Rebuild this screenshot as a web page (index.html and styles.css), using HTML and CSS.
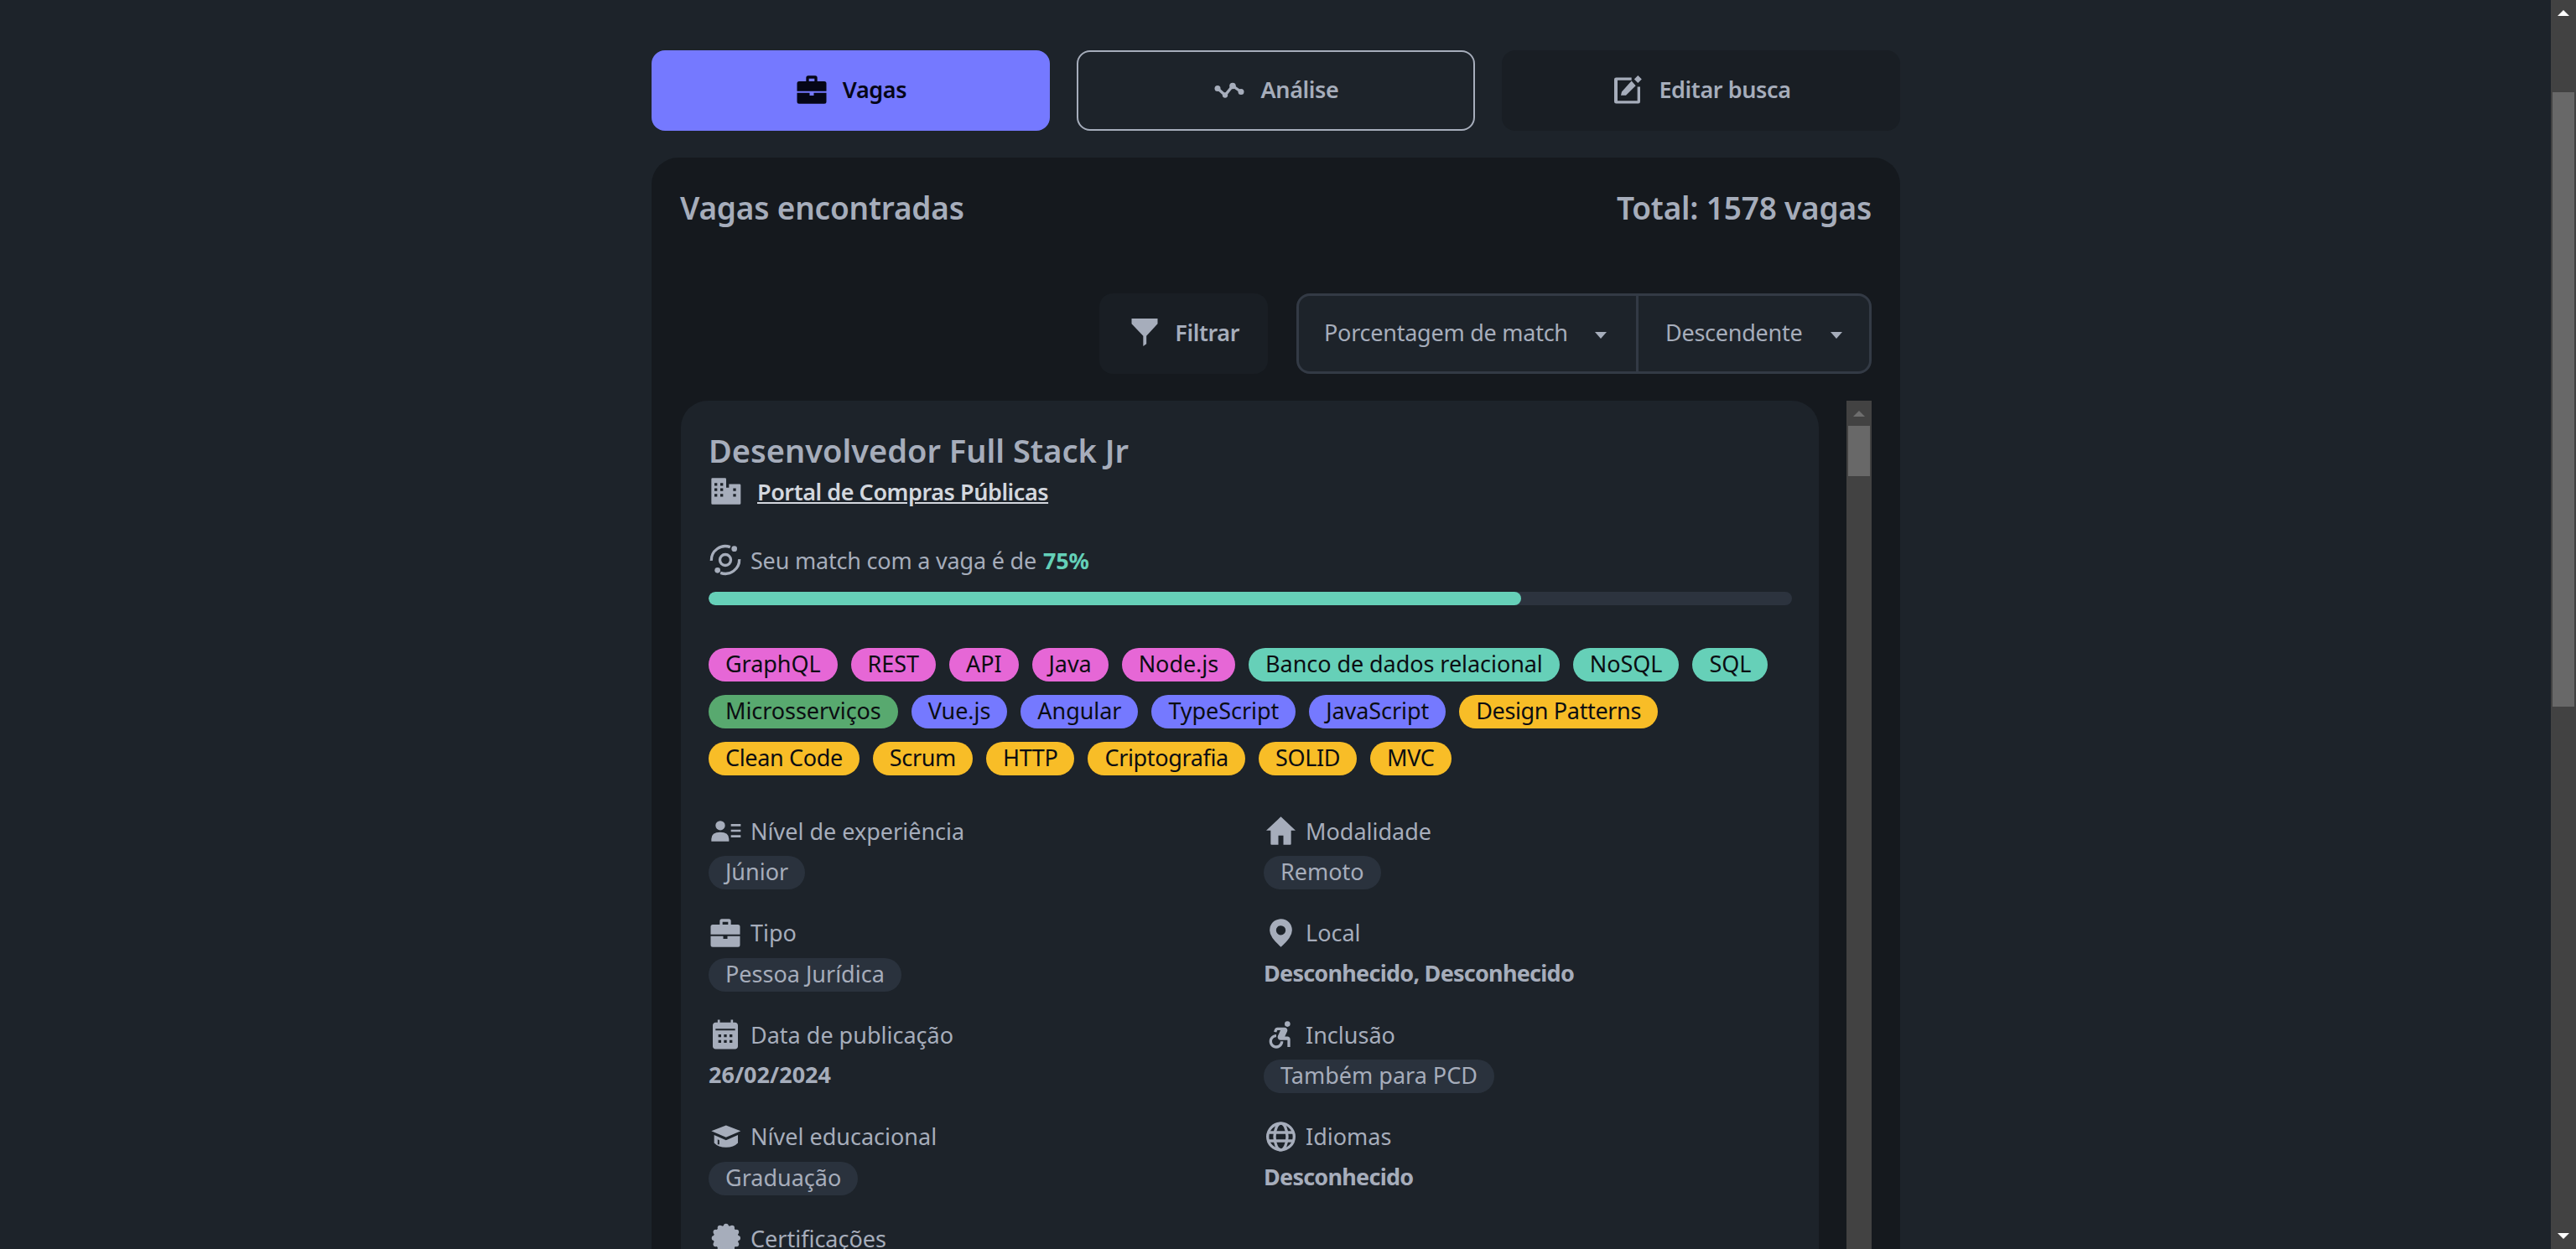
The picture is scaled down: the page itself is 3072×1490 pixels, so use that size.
FILE: index.html
```html
<!DOCTYPE html>
<html lang="pt-BR">

<head>
    <meta charset="UTF-8">
    <title>Vagas</title>
    <link rel="stylesheet" href="styles.css">
</head>

<body>
    <svg class="defs" width="0" height="0">
        <symbol id="i-work" viewBox="0 0 24 24"><path fill-rule="evenodd" d="M8 6V3.500Q8 2 9.500 2h5Q16 2 16 3.500V6h5q1.500 0 1.500 1.500V13H1.500V7.500Q1.500 6 3 6zM10 6h4V4h-4zM1.500 14.200h9v2h3v-2h9v6.300Q22.500 22 21 22H3q-1.500 0-1.500-1.500z"/></symbol>
    </svg>
    <div class="page">
        <nav class="tabs">
            <a class="tab tab-active" href="#"><svg class="icon"><use href="#i-work"/></svg>Vagas</a>
            <a class="tab tab-outline" href="#">
                <svg class="icon" viewBox="0 0 24 24"><path class="icon-line" d="M3 11.100 8.400 15.900 13.800 9.300 19.800 13.500"/><circle cx="3" cy="11.100" r="2.100"/><circle cx="8.400" cy="15.900" r="1.900"/><circle cx="13.800" cy="9.300" r="2.300"/><circle cx="19.800" cy="13.500" r="2.100"/></svg>
                Análise</a>
            <a class="tab tab-dark" href="#">
                <svg class="icon" viewBox="0 0 24 24"><path d="M3.800 3.300h11v2h-10v14.600h14.200v-10h2v10.600q0 1.400-1.400 1.400H3.800q-1.400 0-1.400-1.400V4.700q0-1.400 1.400-1.400z"/><path d="M7.200 16.100 7.800 13.500 14.800 5.700 17.800 9.100 10.800 16.100zM19.400 1.800 22.100 4.500 19.400 7.200 16.700 4.500z"/></svg>
                Editar busca</a>
        </nav>

        <main class="panel">
            <header class="panel-head">
                <h2>Vagas encontradas</h2>
                <h2>Total: 1578 vagas</h2>
            </header>

            <div class="toolbar">
                <button class="filter-btn">
                    <svg class="icon" viewBox="0 0 24 24"><path d="M2.700 1.800H21.300V5.500L13.300 14.200V20L11 21.600V14.200L2.700 5.500Z"/></svg>
                    Filtrar
                </button>
                <div class="sorter">
                    <div class="select select-field">Porcentagem de match<span class="caret"></span></div>
                    <div class="select select-order">Descendente<span class="caret"></span></div>
                </div>
            </div>

            <div class="list">
                <article class="card">
                    <h3>Desenvolvedor Full Stack Jr</h3>
                    <div class="company">
                        <svg class="icon" viewBox="0 0 24 24"><path fill-rule="evenodd" d="M2 3.300q0-.8.8-.8h9q.8 0 .8.8v6.200h2V6.900h7.600q.8 0 .8.8v13q0 .8-.8.8H2.800q-.8 0-.8-.8zM4.200 6.100v2h2v-2zM8.400 6.100v2h2v-2zM4.200 9.900v2h2v-2zM8.400 9.900v2h2v-2zM4.200 13.900v2h2v-2zM8.400 13.900v2h2v-2zM17.600 9.900v2h2v-2zM17.600 13.900v2h2v-2z"/></svg>
                        <a href="#">Portal de Compras Públicas</a>
                    </div>

                    <div class="match">
                        <svg class="icon" viewBox="0 0 24 24"><circle class="icon-line" cx="12" cy="12" r="3.900"/><path class="icon-line" d="M2 12.500A10 10 0 0 1 15.500 2.800M22 11.500A10 10 0 0 1 8.500 21.200"/><circle cx="18.400" cy="4" r="2"/><circle cx="6.400" cy="19.400" r="2"/></svg>
                        Seu match com a vaga é de <b>75%</b>
                    </div>
                    <div class="bar"><div class="bar-fill" style="width: 75%"></div></div>

                    <ul class="tags">
                        <li class="pink">GraphQL</li>
                        <li class="pink">REST</li>
                        <li class="pink">API</li>
                        <li class="pink">Java</li>
                        <li class="pink">Node.js</li>
                        <li class="teal">Banco de dados relacional</li>
                        <li class="teal">NoSQL</li>
                        <li class="teal">SQL</li>
                        <li class="green">Microsserviços</li>
                        <li class="violet">Vue.js</li>
                        <li class="violet">Angular</li>
                        <li class="violet">TypeScript</li>
                        <li class="violet">JavaScript</li>
                        <li class="orange">Design Patterns</li>
                        <li class="orange">Clean Code</li>
                        <li class="orange">Scrum</li>
                        <li class="orange">HTTP</li>
                        <li class="orange">Criptografia</li>
                        <li class="orange">SOLID</li>
                        <li class="orange">MVC</li>
                    </ul>

                    <div class="details">
                        <div class="item">
                            <div class="label"><svg class="icon" viewBox="0 0 24 24"><circle cx="8.400" cy="8.300" r="3.400"/><path d="M2 19.700v-1.800Q2 13 8.300 13t6.300 4.900v1.800zM16 7.200h7v1.600h-7zM16 11.200h7v1.600h-7zM16 15.200h7v1.600h-7z"/></svg>Nível de experiência</div>
                            <span class="pill">Júnior</span>
                        </div>
                        <div class="item">
                            <div class="label"><svg class="icon" viewBox="0 0 24 24"><path d="M12.300 2 1.800 11.800H5V21.400q0 .6.6.6h4.900v-6.500h3.600V22H19q.6 0 .6-.6V11.800h3.200z"/></svg>Modalidade</div>
                            <span class="pill">Remoto</span>
                        </div>
                        <div class="item">
                            <div class="label"><svg class="icon"><use href="#i-work"/></svg>Tipo</div>
                            <span class="pill">Pessoa Jurídica</span>
                        </div>
                        <div class="item">
                            <div class="label"><svg class="icon" viewBox="0 0 24 24"><path fill-rule="evenodd" d="M12.300 2q3.500 0 5.800 2.300t2.200 5.900q0 2.500-2 5.400T12.300 22q-4-3.500-6-6.400t-2-5.400q0-3.600 2.200-5.900T12.300 2zm0 4.700a3.400 3.400 0 1 0 0 6.800 3.400 3.400 0 0 0 0-6.800z"/></svg>Local</div>
                            <span class="value">Desconhecido, Desconhecido</span>
                        </div>
                        <div class="item">
                            <div class="label"><svg class="icon" viewBox="0 0 24 24"><path fill-rule="evenodd" d="M5 3.500h14c1.100 0 2 .9 2 2v15c0 1.100-.9 2-2 2H5c-1.100 0-2-.9-2-2v-15c0-1.100.9-2 2-2zm0 4.500v1.200h14V8zm2 4v2h2v-2zm4 0v2h2v-2zm4 0v2h2v-2zm-8 4v2h2v-2zm4 0v2h2v-2zm4 0v2h2v-2z"/><path d="M6.500 1.500h1.600v3H6.500zM15.900 1.500h1.600v3h-1.600z"/></svg>Data de publicação</div>
                            <span class="value value-date">26/02/2024</span>
                        </div>
                        <div class="item">
                            <div class="label"><svg class="icon" viewBox="0 0 24 24"><circle cx="17" cy="4.540" r="2"/><path d="M14 17h-2c0 1.650-1.350 3-3 3s-3-1.350-3-3 1.350-3 3-3v-2c-2.760 0-5 2.240-5 5s2.240 5 5 5 5-2.240 5-5zm3-3.500h-1.860l1.670-3.670C17.420 8.500 16.440 7 14.960 7h-5.200c-.81 0-1.540.47-1.870 1.200L7.220 10l1.920.53L9.790 9H12l-1.830 4.100c-.6 1.330.39 2.900 1.850 2.900H17v5h2v-5.500c0-1.100-.9-2-2-2z"/></svg>Inclusão</div>
                            <span class="pill">Também para PCD</span>
                        </div>
                        <div class="item">
                            <div class="label"><svg class="icon" viewBox="0 0 24 24"><path fill-rule="evenodd" d="M12.500 3.900 23 8l-10.500 4.500L2 8zM4 10.800l8.500 3.700 8.500-3.700v5.700q-3 3.200-8.500 3.200T4 16.500zM6.500 14v3.500h1.200v-3z"/></svg>Nível educacional</div>
                            <span class="pill">Graduação</span>
                        </div>
                        <div class="item">
                            <div class="label"><svg class="icon" viewBox="0 0 24 24"><g class="icon-line"><circle cx="12.300" cy="12" r="9.500"/><ellipse cx="12.300" cy="12" rx="4.500" ry="9.500"/><path d="M3.300 9h18M3.300 15h18"/></g></svg>Idiomas</div>
                            <span class="value">Desconhecido</span>
                        </div>
                        <div class="item">
                            <div class="label"><svg class="icon" viewBox="0 0 24 24"><circle cx="12.500" cy="12" r="9"/><circle cx="12.500" cy="3.500" r="1.800"/><circle cx="16.800" cy="4.600" r="1.800"/><circle cx="19.900" cy="7.700" r="1.800"/><circle cx="21" cy="12" r="1.800"/><circle cx="19.900" cy="16.300" r="1.800"/><circle cx="16.800" cy="19.400" r="1.800"/><circle cx="12.500" cy="20.500" r="1.800"/><circle cx="8.200" cy="19.400" r="1.800"/><circle cx="5.100" cy="16.300" r="1.800"/><circle cx="4" cy="12" r="1.800"/><circle cx="5.100" cy="7.700" r="1.800"/><circle cx="8.200" cy="4.600" r="1.800"/></svg>Certificações</div>
                        </div>
                    </div>
                </article>

                <div class="scrollbar">
                    <span class="arrow-up"></span>
                    <div class="thumb"></div>
                </div>
            </div>
        </main>
    </div>

    <aside class="page-scroll">
        <span class="arrow-up"></span>
        <div class="thumb"></div>
        <span class="arrow-down"></span>
    </aside>
</body>

</html>
```

FILE: styles.css
```css
* {
    box-sizing: border-box;
}

html,
body {
    height: 100%;
}

body {
    margin: 0;
    overflow: hidden;
    background: #1d232a;
    color: #a6adbb;
    font-family: "Noto Sans", "Open Sans", sans-serif;
    font-size: 27px;
}

a {
    color: inherit;
    text-decoration: none;
}

ul {
    margin: 0;
    padding: 0;
    list-style: none;
}

.defs {
    position: absolute;
}

.icon {
    flex: none;
    width: 40px;
    height: 40px;
    fill: currentColor;
    overflow: visible;
}

.icon-line {
    fill: none;
    stroke: currentColor;
    stroke-width: 2;
}

.page {
    width: 1489px;
    height: 1490px;
    margin-left: 777px;
    padding-top: 60px;
    overflow: hidden;
}

.tabs {
    display: grid;
    grid-template-columns: repeat(3, 1fr);
    gap: 32px;
}

.tab {
    display: flex;
    align-items: center;
    justify-content: center;
    gap: 17px;
    height: 96px;
    padding-bottom: 3px;
    border-radius: 16px;
    font-weight: 600;
    letter-spacing: -0.4px;
}

.tab-active {
    background: #7579ff;
    color: #050617;
}

.tab-outline {
    border: 2px solid #a6adbb;
}

.tab-dark {
    background: #191e24;
}

.panel {
    height: 1400px;
    margin-top: 32px;
    padding: 32px 34px 32px 35px;
    background: #15191e;
    border-radius: 32px 32px 0 0;
}

.panel-head {
    display: flex;
    justify-content: space-between;
    margin-left: -1px;
}

.panel-head h2 {
    margin: 0;
    font-size: 37px;
    font-weight: 600;
    line-height: 56px;
    letter-spacing: -0.2px;
}

.toolbar {
    display: flex;
    justify-content: flex-end;
    gap: 34px;
    margin-top: 74px;
}

.filter-btn {
    display: flex;
    align-items: center;
    gap: 16px;
    height: 96px;
    padding: 0 34px 3px;
    border: 0;
    border-radius: 16px;
    background: #191e24;
    color: inherit;
    font: inherit;
    font-weight: 600;
    letter-spacing: -0.4px;
}

.sorter {
    display: flex;
    height: 96px;
    border: 3px solid #333a45;
    border-radius: 16px;
    background: #1d232a;
    letter-spacing: -0.25px;
}

.select {
    display: flex;
    align-items: center;
    justify-content: space-between;
    padding: 0 32px 3px 30px;
}

.select-field {
    width: 405px;
    border-right: 3px solid #333a45;
    padding-right: 35px;
}

.select-order {
    width: 275px;
    padding-left: 32px;
}

.caret {
    width: 0;
    height: 0;
    margin-top: 6px;
    border-left: 7px solid transparent;
    border-right: 7px solid transparent;
    border-top: 8px solid currentColor;
}

.list {
    display: flex;
    justify-content: space-between;
    align-items: flex-start;
    margin-top: 32px;
}

.card {
    width: 1357px;
    padding: 32px 32px 32px 33px;
    background: #1d232a;
    border-radius: 32px;
}

.card h3 {
    margin: 0;
    font-size: 38px;
    font-weight: 600;
    line-height: 54px;
}

.company {
    display: flex;
    align-items: center;
    gap: 18px;
    height: 36px;
    margin-top: 4px;
}

.company a {
    color: #d3d7de;
    font-weight: 600;
    letter-spacing: -0.45px;
    text-decoration: underline;
}

.match {
    display: flex;
    align-items: center;
    gap: 10px;
    height: 40px;
    margin-top: 44px;
    letter-spacing: -0.2px;
}

.match b {
    margin-left: -2px;
    color: #64d0b8;
}

.bar {
    height: 16px;
    margin-top: 18px;
    border-radius: 8px;
    background: #2c333e;
    overflow: hidden;
}

.bar-fill {
    height: 100%;
    border-radius: 8px;
    background: #66d0b8;
}

.tags {
    display: flex;
    flex-wrap: wrap;
    gap: 16px;
    margin-top: 51px;
}

.tags li {
    height: 40px;
    padding: 0 20px;
    border-radius: 20px;
    color: #0b0d12;
    line-height: 38px;
    letter-spacing: -0.06px;
}

.pink {
    background: #e667d6;
}

.teal {
    background: #66d0b8;
}

.green {
    background: #58a96f;
}

.violet {
    background: #7579ff;
}

.tags .orange {
    background: #f8bd27;
    letter-spacing: -0.35px;
}

.details {
    display: grid;
    grid-template-columns: 662px 1fr;
    grid-auto-rows: 121.6px;
    margin-top: 46px;
}

.label {
    display: flex;
    align-items: center;
    gap: 10px;
    height: 40px;
}

.value {
    display: block;
    margin-top: 8px;
    font-weight: 700;
    line-height: 40px;
    letter-spacing: -0.75px;
}

.value-date {
    letter-spacing: 0;
}

.pill {
    display: inline-block;
    height: 40px;
    margin-top: 10px;
    padding: 0 20px;
    border-radius: 20px;
    background: #2a323d;
    line-height: 38px;
}

.scrollbar {
    position: relative;
    width: 30px;
    height: 1100px;
    background: #424242;
}

.scrollbar .arrow-up {
    position: absolute;
    left: 8px;
    top: 12px;
    border-left: 7px solid transparent;
    border-right: 7px solid transparent;
    border-bottom: 7px solid #6e6e6e;
}

.thumb {
    background: #686868;
}

.scrollbar .thumb {
    position: absolute;
    left: 2px;
    top: 30px;
    width: 26px;
    height: 60px;
}

.page-scroll {
    position: fixed;
    top: 0;
    right: 0;
    width: 30px;
    height: 100%;
    background: #424242;
}

.page-scroll .arrow-up {
    position: absolute;
    left: 8px;
    top: 12px;
    border-left: 7px solid transparent;
    border-right: 7px solid transparent;
    border-bottom: 7px solid #fff;
}

.page-scroll .arrow-down {
    position: absolute;
    left: 8px;
    bottom: 12px;
    border-left: 7px solid transparent;
    border-right: 7px solid transparent;
    border-top: 7px solid #fff;
}

.page-scroll .thumb {
    position: absolute;
    left: 2px;
    top: 110px;
    width: 26px;
    height: 733px;
}
```
